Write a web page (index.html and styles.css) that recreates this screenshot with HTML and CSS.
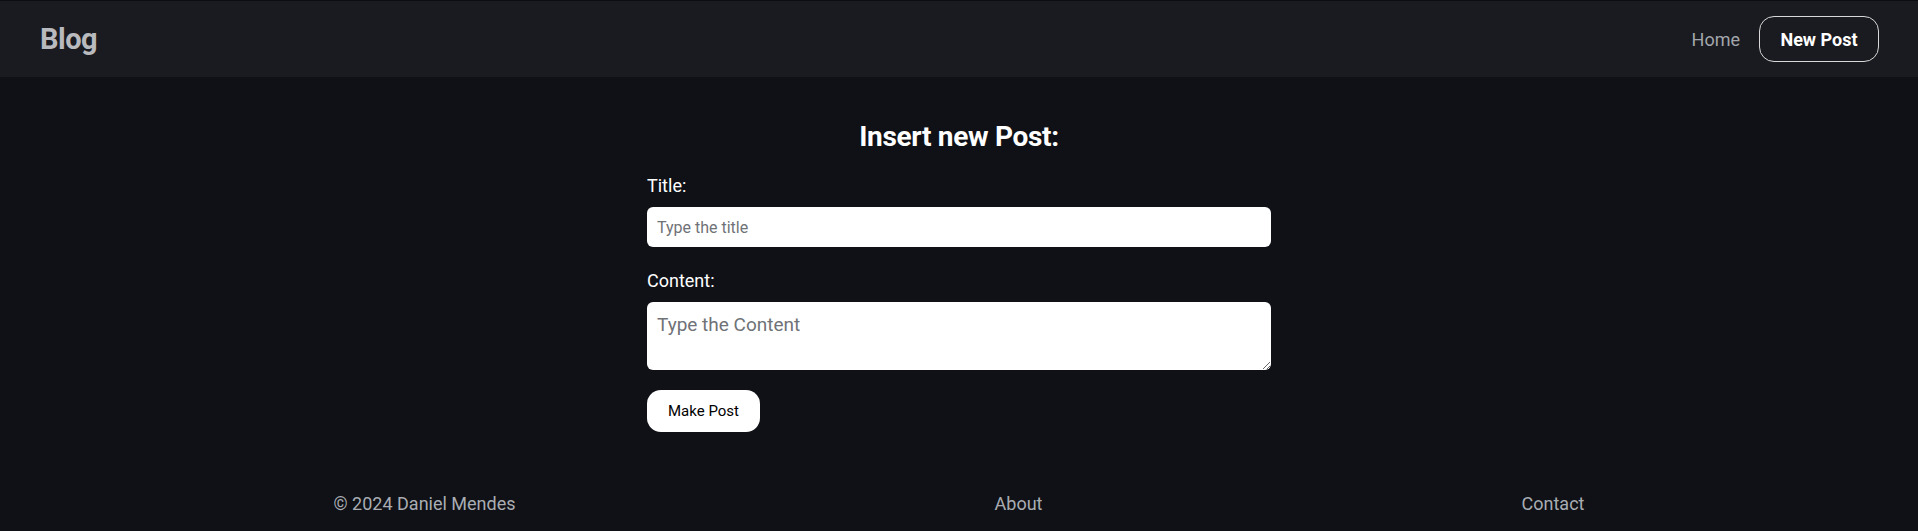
FILE: index.html
```html
<!DOCTYPE html>
<html lang="en">
<head>
<meta charset="utf-8">
<title>Blog</title>
<link rel="stylesheet" href="styles.css">
</head>
<body>
<header class="topbar">
  <a class="brand" href="#">Blog</a>
  <nav class="nav">
    <a class="nav-link" href="#">Home</a>
    <a class="nav-btn" href="#">New Post</a>
  </nav>
</header>
<main class="main">
  <h1 class="heading">Insert new Post:</h1>
  <form class="post-form">
    <label class="label" for="title">Title:</label>
    <input class="input" id="title" type="text" placeholder="Type the title">
    <label class="label label-content" for="content">Content:</label>
    <textarea class="textarea" id="content" placeholder="Type the Content"></textarea>
    <button class="submit" type="button">Make Post</button>
  </form>
</main>
<footer class="footer">
  <span class="foot-item">© 2024 Daniel Mendes</span>
  <a class="foot-item" href="#">About</a>
  <a class="foot-item" href="#">Contact</a>
</footer>
</body>
</html>
```
FILE: styles.css
```css
* { box-sizing: border-box; }
html, body { margin: 0; padding: 0; }
body {
  background: #0f1116;
  font-family: Roboto, "Liberation Sans", sans-serif;
  color: #ffffff;
  min-height: 531px;
}
a { text-decoration: none; }

.topbar {
  height: 77px;
  border-top: 1px solid #0c0d10;
  background: #1a1b20;
  display: flex;
  align-items: center;
  justify-content: space-between;
  padding: 0 39px 0 40px;
}
.brand {
  font-size: 29px;
  font-weight: 700;
  color: #b9babd;
  letter-spacing: -0.5px;
}
.nav {
  display: flex;
  align-items: center;
  gap: 19px;
}
.nav-link {
  color: #a3a6ab;
  font-size: 18px;
}
.nav-btn {
  width: 120px;
  height: 46px;
  border: 1px solid #d8d8d8;
  border-radius: 15px;
  display: flex;
  align-items: center;
  justify-content: center;
  color: #ffffff;
  font-weight: 700;
  font-size: 18px;
  letter-spacing: 0;
}

.main {
  display: flex;
  flex-direction: column;
  align-items: center;
  padding-top: 44px;
}
.heading {
  margin: 0;
  font-size: 28px;
  font-weight: 700;
  line-height: 32px;
  letter-spacing: -0.3px;
}
.post-form {
  width: 624px;
  display: flex;
  flex-direction: column;
  align-items: flex-start;
  padding-top: 23px;
}
.label {
  font-size: 18px;
  line-height: 20px;
  color: #ffffff;
  margin-bottom: 11px;
}
.label-content { margin-top: 24px; }
.input {
  width: 100%;
  height: 40px;
  border: none;
  border-radius: 6px;
  background: #ffffff;
  padding: 0 10px;
  font-family: Roboto, "Liberation Sans", sans-serif;
  font-size: 16px;
  outline: none;
}
.input::placeholder, .textarea::placeholder { color: #6f7277; }
.textarea {
  width: 100%;
  height: 68px;
  border: none;
  border-radius: 6px;
  background: #ffffff;
  padding: 11px 10px;
  font-family: Roboto, "Liberation Sans", sans-serif;
  font-size: 19px;
  outline: none;
  margin: 0;
  display: block;
}
.submit {
  margin-top: 20px;
  width: 113px;
  height: 42px;
  border: none;
  border-radius: 14px;
  background: #ffffff;
  color: #000000;
  font-family: Roboto, "Liberation Sans", sans-serif;
  font-size: 15px;
}

.footer {
  width: 1251px;
  margin: 62px auto 0;
  display: flex;
  justify-content: space-between;
  font-size: 18px;
  line-height: 20px;
}
.foot-item { color: #a9adb3; }
```
